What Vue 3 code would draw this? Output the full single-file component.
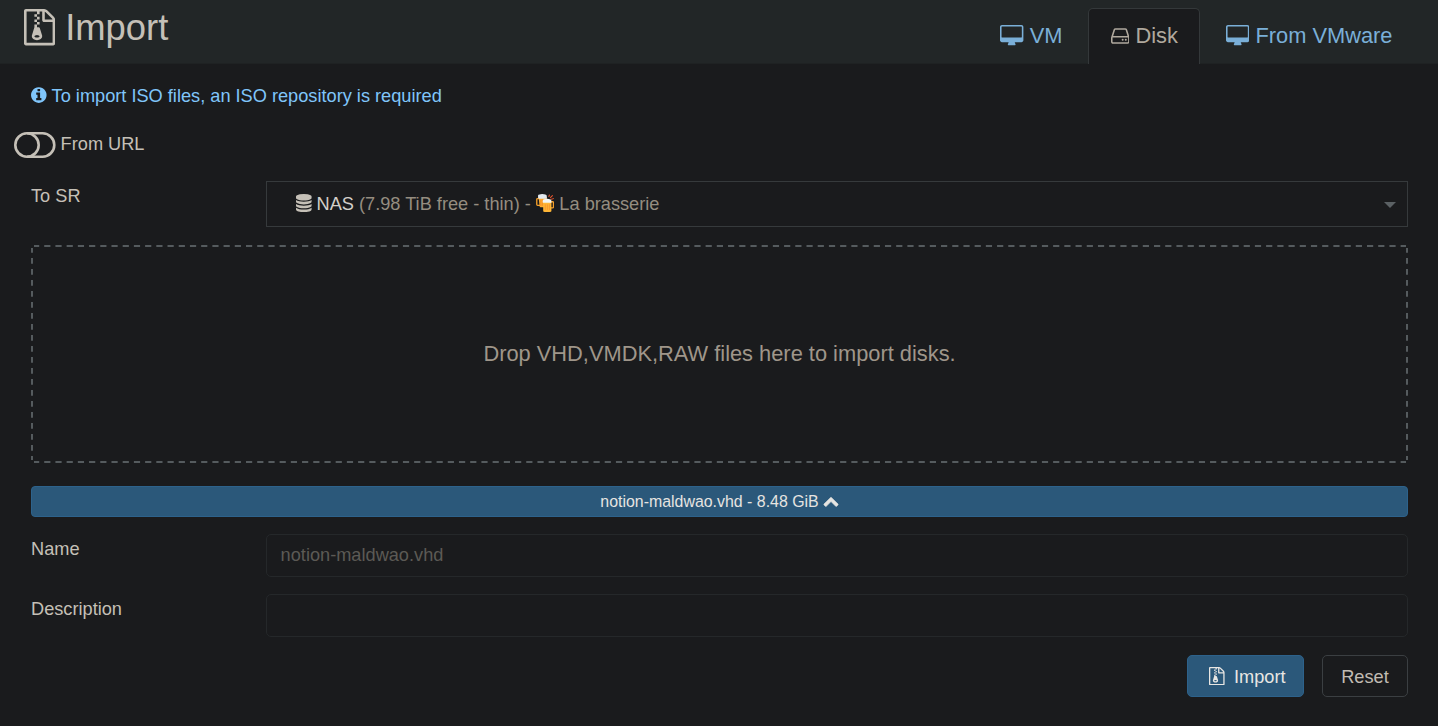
<script setup>
import { ref, h } from 'vue'

const icons = {
  archive: {
    box: '0 0 1536 1792',
    d: 'M640 384v-128h-128v128h128zm128 128v-128h-128v128h128zm-128 128v-128h-128v128h128zm128 128v-128h-128v128h128zm700-388q28 28 48 76t20 88v1152q0 40-28 68t-68 28h-1344q-40 0-68-28t-28-68v-1600q0-40 28-68t68-28h896q40 0 88 20t76 48zm-444-244v376h376q-10-29-22-41l-313-313q-12-12-41-22zm384 1528v-1024h-416q-40 0-68-28t-28-68v-416h-128v128h-128v-128h-512v1536h1280zm-627-721l107 349q8 27 8 52 0 83-72.5 137.5t-183.5 54.5-183.5-54.5-72.5-137.5q0-25 8-52 21-63 120-396v-128h128v128h79q22 0 39 13t23 34zm-141 465q53 0 90.5-19t37.5-45-37.5-45-90.5-19-90.5 19-37.5 45 37.5 45 90.5 19z',
  },
  desktop: {
    box: '-64 0 1920 1792',
    d: 'M1728 992v-832q0-13-9.5-22.5t-22.5-9.5h-1600q-13 0-22.5 9.5t-9.5 22.5v832q0 13 9.5 22.5t22.5 9.5h1600q13 0 22.5-9.5t9.5-22.5zm128-832v1088q0 66-47 113t-113 47h-544q0 37 16 77.5t32 71 16 43.5q0 26-19 45t-45 19h-512q-26 0-45-19t-19-45q0-14 16-44t32-70 16-78h-544q-66 0-113-47t-47-113v-1088q0-66 47-113t113-47h1600q66 0 113 47t47 113z',
  },
  disk: {
    box: '128 0 1536 1792',
    d: 'M1168 1216q0 33-23.5 56.5t-56.5 23.5-56.5-23.5-23.5-56.5 23.5-56.5 56.5-23.5 56.5 23.5 23.5 56.5zm256 0q0 33-23.5 56.5t-56.5 23.5-56.5-23.5-23.5-56.5 23.5-56.5 56.5-23.5 56.5 23.5 23.5 56.5zm112 160v-320q0-13-9.5-22.5t-22.5-9.5h-1216q-13 0-22.5 9.5t-9.5 22.5v320q0 13 9.5 22.5t22.5 9.5h1216q13 0 22.5-9.5t9.5-22.5zm-1230-480h1180l-157-482q-4-13-16-21.5t-26-8.5h-782q-14 0-26 8.5t-16 21.5zm1358 160v320q0 66-47 113t-113 47h-1216q-66 0-113-47t-47-113v-320q0-25 16-75l197-606q17-53 63-86t101-33h782q55 0 101 33t63 86l197 606q16 50 16 75z',
  },
  info: {
    box: '128 0 1536 1792',
    d: 'M1152 1376v-160q0-14-9-23t-23-9h-96v-512q0-14-9-23t-23-9h-320q-14 0-23 9t-9 23v160q0 14 9 23t23 9h96v320h-96q-14 0-23 9t-9 23v160q0 14 9 23t23 9h448q14 0 23-9t9-23zm-128-896v-160q0-14-9-23t-23-9h-192q-14 0-23 9t-9 23v160q0 14 9 23t23 9h192q14 0 23-9t9-23zm640 416q0 209-103 385.5t-279.5 279.5-385.5 103-385.5-103-279.5-279.5-103-385.5 103-385.5 279.5-279.5 385.5-103 385.5 103 279.5 279.5 103 385.5z',
  },
  database: {
    box: '128 0 1536 1792',
    d: 'M896 768q237 0 443-43t325-127v170q0 69-103 128t-280 93.5-385 34.5-385-34.5-280-93.5-103-128v-170q119 84 325 127t443 43zm0 768q237 0 443-43t325-127v170q0 69-103 128t-280 93.5-385 34.5-385-34.5-280-93.5-103-128v-170q119 84 325 127t443 43zm0-384q237 0 443-43t325-127v170q0 69-103 128t-280 93.5-385 34.5-385-34.5-280-93.5-103-128v-170q119 84 325 127t443 43zm0-1152q208 0 385 34.5t280 93.5 103 128v128q0 69-103 128t-280 93.5-385 34.5-385-34.5-280-93.5-103-128v-128q0-69 103-128t280-93.5 385-34.5z',
  },
  chevronUp: {
    box: '0 0 1792 1792',
    d: 'M1683 1331l-166 165q-19 19-45 19t-45-19l-531-531-531 531q-19 19-45 19t-45-19l-166-165q-19-19-19-45.5t19-45.5l742-741q19-19 45-19t45 19l742 741q19 19 19 45.5t-19 45.5z',
  },
}

const Icon = (props) =>
  h('svg', { viewBox: icons[props.name].box, fill: 'currentColor', 'aria-hidden': 'true' }, [
    h('path', { d: icons[props.name].d }),
  ])
Icon.props = ['name']

const tabs = [
  { label: 'VM', icon: 'desktop' },
  { label: 'Disk', icon: 'disk' },
  { label: 'From VMware', icon: 'desktop' },
]
const active = ref('Disk')
const name = ref('notion-maldwao.vhd')
const description = ref('')
</script>

<template>
  <div class="page">
    <header class="header">
      <h2 class="title"><Icon name="archive" class="title-icon" />Import</h2>
      <nav class="tabs">
        <a
          v-for="t in tabs"
          :key="t.label"
          class="tab"
          :class="[t.icon, { active: active === t.label }]"
          @click="active = t.label"
        ><Icon :name="t.icon" class="tab-icon" />{{ t.label }}</a>
      </nav>
    </header>

    <main class="content">
      <p class="notice"><Icon name="info" class="icon" /><span>To import ISO files, an ISO repository is required</span></p>

      <div class="toggle-row">
        <svg class="toggle" viewBox="0 0 2048 1280" fill="none" stroke="currentColor" stroke-width="128">
          <rect x="64" y="64" width="1920" height="1152" rx="576" />
          <path d="M640 64a576 576 0 0 1 0 1152" />
        </svg>
        <span>From URL</span>
      </div>

      <div class="row sr-row">
        <label class="label">To SR</label>
        <div class="select">
          <Icon name="database" class="icon db" />
          <span class="sr-name">NAS</span>
          <span class="muted">(7.98 TiB free - thin) -</span>
          <svg class="beer" viewBox="0 0 36 36" aria-hidden="true">
            <path d="M25 5l1-3M28 7l4-4M30 10l4-1" stroke="#e8542c" stroke-width="2" stroke-linecap="round" />
            <path d="M6 9H3q-1.500 0-1.500 1.500v10q0 1.500 1.500 1.500h5" fill="none" stroke="#f5a02b" stroke-width="2.600" />
            <path d="M5 6h16v20H9q-2 0-2-2z" fill="#ffac33" />
            <path d="M9.500 11v12M13 11v12" stroke="#f48b21" stroke-width="1.800" />
            <path d="M4 7V3q0-2 3-2 2-1 5-1 4 0 6 1 3 0 3 3v5H6q-2 0-2-2z" fill="#e3eaf0" />
            <path d="M29 15h3.500q1.500 0 1.500 1.500v9q0 1.500-1.500 1.500H29" fill="none" stroke="#f5a02b" stroke-width="2.600" />
            <path d="M14 15h16v18q0 2-3 2H17q-3 0-3-2z" fill="#ffb636" />
            <path d="M18 20v11M22 20v11M26 20v11" stroke="#f9932b" stroke-width="1.800" />
            <path d="M13 16v-3q0-3 3-3 3-1 6-1t5 1q3 0 3 3v4H15q-2 0-2-1z" fill="#f2f5f7" />
          </svg>
          <span class="muted">La brasserie</span>
          <span class="caret"></span>
        </div>
      </div>

      <div class="dropzone">
        <svg class="frame" viewBox="0 0 1377 218" aria-hidden="true">
          <path class="edge-h" d="M3 1H1375M3 217H1375" />
          <path class="edge-v" d="M1 3V215M1376 3V215" />
        </svg>
        Drop VHD,VMDK,RAW files here to import disks.
      </div>

      <button class="file-bar">notion-maldwao.vhd - 8.48 GiB<Icon name="chevronUp" class="chevron" /></button>

      <div class="row field-row">
        <label class="label" for="disk-name">Name</label>
        <input id="disk-name" class="input" :placeholder="name" />
      </div>
      <div class="row field-row">
        <label class="label" for="disk-desc">Description</label>
        <input id="disk-desc" v-model="description" class="input" />
      </div>

      <div class="actions">
        <button class="btn primary"><Icon name="archive" class="icon" /><span>Import</span></button>
        <button class="btn secondary"><span>Reset</span></button>
      </div>
    </main>
  </div>
</template>

<style>
body {
  background: #1a1b1d;
}
</style>

<style scoped>
.page {
  height: 726px;
  overflow: hidden;
  background: #1a1b1d;
  color: #c5c0b7;
  font: 18.2px/27px "Liberation Sans", Arial, sans-serif;
}
.page * {
  box-sizing: border-box;
}
.header {
  display: flex;
  justify-content: space-between;
  height: 64px;
  padding: 0 22.5px 0 24px;
  background: #222627;
  border-bottom: 1px solid #1f2223;
}
.title {
  display: flex;
  align-items: center;
  gap: 10px;
  height: 55px;
  margin: 0;
  font-size: 36.4px;
  font-weight: 400;
  line-height: 40px;
}
.title-icon {
  width: 31.2px;
  height: 36.4px;
}
.tabs {
  display: flex;
  gap: 2.2px;
  padding-top: 8px;
}
.tab {
  display: flex;
  align-items: center;
  height: 56px;
  padding: 0 22px 2px;
  border: 1px solid transparent;
  border-bottom: 0;
  border-radius: 5px 5px 0 0;
  color: #7aafd8;
  font-size: 21.84px;
  cursor: pointer;
}
.tab.disk {
  margin-right: 1px;
  padding-right: 21px;
}
.tab.active {
  background: #1a1b1d;
  border-color: #34383a;
  color: #b0a99e;
}
.tab-icon {
  width: 23.4px;
  height: 21.84px;
  margin-right: 6px;
}
.tab.disk .tab-icon {
  width: 18.7px;
}
.icon {
  width: 15.6px;
  height: 18.2px;
  flex: none;
}
.content {
  padding: 18px 30px 0 31px;
}
.notice {
  display: flex;
  align-items: center;
  gap: 5px;
  height: 27px;
  margin: 0;
  color: #80c6fb;
}
.notice span {
  padding-top: 2px;
}
.toggle-row {
  display: flex;
  gap: 5px;
  height: 27px;
  margin: 21px 0 0 -17px;
  line-height: 29px;
}
.toggle {
  width: 41.6px;
  height: 26px;
  margin-top: 1.5px;
}
.row {
  display: flex;
}
.label {
  flex: 0 0 235px;
}
.sr-row {
  margin-top: 24px;
}
.sr-row .label {
  padding-top: 2px;
}
.select {
  display: flex;
  flex: 1;
  align-items: center;
  height: 46px;
  padding: 0 11px 0 29px;
  border: 1px solid #363a3c;
}
.db {
  margin: 0 5px 2px 0;
}
.sr-name {
  margin-right: 5px;
  color: #d3cfc9;
}
.muted {
  color: #958d80;
}
.beer {
  width: 18.5px;
  height: 18.5px;
  margin: 0 5px 2px;
}
.caret {
  margin: 2px 0 0 auto;
  border: 6px solid transparent;
  border-top-color: #5b6164;
  border-bottom: 0;
}
.dropzone {
  position: relative;
  display: flex;
  align-items: center;
  justify-content: center;
  height: 218px;
  margin-top: 18px;
  padding-bottom: 2px;
  color: #9f968a;
  font-size: 21.84px;
}
.frame {
  position: absolute;
  inset: 0;
  width: 100%;
  height: 100%;
  fill: none;
  stroke: #555b5e;
  stroke-width: 2;
}
.edge-h {
  stroke-dasharray: 6.2 5.01;
  stroke-dashoffset: 1;
}
.edge-v {
  stroke-dasharray: 5.8 5.2;
  stroke-dashoffset: 1;
}
.file-bar {
  display: flex;
  align-items: center;
  justify-content: center;
  gap: 4px;
  width: 100%;
  height: 31px;
  margin: 23px 0 17px;
  padding: 0;
  border: 1px solid #2d628b;
  border-radius: 4px;
  background: #2b587a;
  color: #e6e4e1;
  font: 15.925px "Liberation Sans", Arial, sans-serif;
}
.chevron {
  width: 16px;
  height: 16px;
  margin-bottom: 1px;
  stroke: currentColor;
  stroke-width: 60;
}
.field-row {
  height: 60px;
}
.field-row .label {
  padding-top: 2px;
}
.input {
  flex: 1;
  height: 43px;
  padding: 0 13.6px;
  border: 1px solid #25282a;
  border-radius: 5px;
  background: #1a1b1d;
  color: #c5c0b7;
  font: 18.2px "Liberation Sans", Arial, sans-serif;
  outline: 0;
}
.input::placeholder {
  color: #5c5a55;
  opacity: 1;
}
.actions {
  display: flex;
  justify-content: flex-end;
  gap: 18px;
  padding-top: 1px;
}
.btn {
  display: flex;
  align-items: center;
  justify-content: center;
  height: 42px;
  border-radius: 5px;
  font: 18.2px "Liberation Sans", Arial, sans-serif;
}
.btn span {
  padding-top: 2px;
}
.primary {
  width: 117px;
  gap: 9px;
  padding: 0 0 0 4px;
  border: 1px solid #2d628b;
  background: #2b587a;
  color: #e8e6e3;
}
.secondary {
  width: 86px;
  padding: 0;
  border: 1px solid #3b3f42;
  background: #1a1b1d;
  color: #c2bcb3;
}
</style>
